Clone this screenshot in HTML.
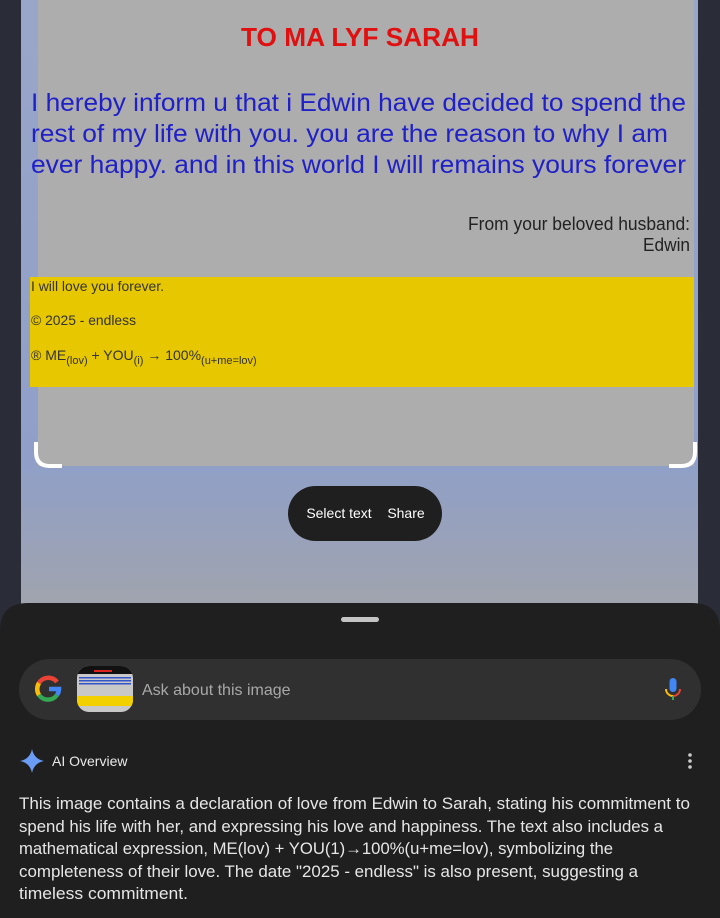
<!DOCTYPE html>
<html><head><meta charset="utf-8"><style>
html,body{margin:0;padding:0;width:720px;height:918px;overflow:hidden;background:#2a2d38;font-family:"Liberation Sans",sans-serif}
</style></head><body>
<svg width="720" height="918" viewBox="0 0 720 918" xmlns="http://www.w3.org/2000/svg" style="display:block;position:absolute;left:0;top:0">
<defs>
<linearGradient id="sky" x1="0" y1="0" x2="0" y2="1">
<stop offset="0" stop-color="#9aa6c9"/><stop offset="0.75" stop-color="#8f9fc8"/><stop offset="1" stop-color="#a1a4ad"/>
</linearGradient>
</defs>
<rect x="0" y="0" width="720" height="918" fill="#2a2d38"/>
<rect x="21" y="0" width="677" height="610" fill="url(#sky)"/>
<rect x="38" y="0" width="656" height="466" fill="#adadad"/>
<rect x="30" y="277" width="664" height="110" fill="#e6c700"/>
<text x="360" y="46" text-anchor="middle" font-size="26" font-weight="bold" fill="#e01010" textLength="238" lengthAdjust="spacingAndGlyphs">TO MA LYF SARAH</text>
<g font-size="25" fill="#2020c8">
<text x="31" y="111" textLength="655" lengthAdjust="spacingAndGlyphs">I hereby inform u that i Edwin have decided to spend the</text>
<text x="31" y="142" textLength="637" lengthAdjust="spacingAndGlyphs">rest of my life with you. you are the reason to why I am</text>
<text x="31" y="173" textLength="655" lengthAdjust="spacingAndGlyphs">ever happy. and in this world I will remains yours forever</text>
</g>
<g font-size="18" fill="#222" text-anchor="end">
<text x="690" y="230" textLength="222" lengthAdjust="spacingAndGlyphs">From your beloved husband:</text>
<text x="690" y="251" textLength="47" lengthAdjust="spacingAndGlyphs">Edwin</text>
</g>
<g font-size="14" fill="#333">
<text x="31" y="291" textLength="133" lengthAdjust="spacingAndGlyphs">I will love you forever.</text>
<text x="31" y="325" textLength="105" lengthAdjust="spacingAndGlyphs">© 2025 - endless</text>
<text x="31" y="360">® ME<tspan font-size="11" dy="4">(lov)</tspan><tspan dy="-4"> + YOU</tspan><tspan font-size="11" dy="4">(i)</tspan><tspan dy="-4"> → 100%</tspan><tspan font-size="11" dy="4">(u+me=lov)</tspan></text>
</g>
<path d="M36 442 V452 Q36 466 50 466 H62" fill="none" stroke="#fff" stroke-width="4"/>
<path d="M695 442 V452 Q695 466 681 466 H669" fill="none" stroke="#fff" stroke-width="4"/>
<rect x="288" y="486" width="154" height="55" rx="27.5" fill="#1f1f1f"/>
<text x="339" y="518" text-anchor="middle" font-size="14" fill="#fff">Select text</text>
<text x="406" y="518" text-anchor="middle" font-size="14" fill="#fff">Share</text>
<path d="M0 918 V631 Q0 603 28 603 H692 Q720 603 720 631 V918 Z" fill="#1f1f1f"/>
<rect x="341" y="617" width="38" height="5" rx="2.5" fill="#c4c4c4"/>
<rect x="19" y="659" width="682" height="61" rx="30.5" fill="#303030"/>
<g transform="translate(48,689)" fill="none" stroke-width="4.5">
<path d="M9 -7 A11 11 0 0 0 -9 -6" stroke="#ea4335"/>
<path d="M-9 -6 A11 11 0 0 0 -9 6" stroke="#fbbc05"/>
<path d="M-9 6 A11 11 0 0 0 9 6" stroke="#34a853"/>
<path d="M9 6 A11 11 0 0 0 11 0 H1" stroke="#4285f4"/>
</g>
<clipPath id="th"><rect x="77" y="666" width="56" height="46" rx="12"/></clipPath>
<g clip-path="url(#th)">
<rect x="77" y="666" width="56" height="46" fill="#c8c8c8"/>
<rect x="77" y="666" width="56" height="8" fill="#111"/>
<rect x="94" y="670" width="18" height="2" fill="#d22"/>
<rect x="79" y="677" width="52" height="1.5" fill="#35c"/>
<rect x="79" y="680" width="52" height="1.5" fill="#35c"/>
<rect x="79" y="683" width="52" height="1.5" fill="#35c"/>
<rect x="77" y="696" width="56" height="10" fill="#f2d000"/>
</g>
<text x="142" y="695" font-size="16" fill="#a8a8a8">Ask about this image</text>
<g transform="translate(673,689)">
<rect x="-3.5" y="-11" width="7" height="14" rx="3.5" fill="#4285f4"/>
<path d="M-7 0 A7 7 0 0 0 0 7" fill="none" stroke="#fbbc05" stroke-width="2"/>
<path d="M7 0 A7 7 0 0 1 0 7" fill="none" stroke="#ea4335" stroke-width="2"/>
<rect x="-1" y="7" width="2" height="4" fill="#34a853"/>
</g>
<path d="M32 749 Q34 759 44 761 Q34 763 32 773 Q30 763 20 761 Q30 759 32 749 Z" fill="#6b9cf6"/>
<text x="52" y="766" font-size="14" fill="#e8e8e8">AI Overview</text>
<circle cx="690" cy="755" r="1.8" fill="#ccc"/><circle cx="690" cy="761" r="1.8" fill="#ccc"/><circle cx="690" cy="767" r="1.8" fill="#ccc"/>
<g font-size="17" fill="#e6e6e6">
<text x="19" y="809" textLength="671" lengthAdjust="spacingAndGlyphs">This image contains a declaration of love from Edwin to Sarah, stating his commitment to</text>
<text x="19" y="832" textLength="644" lengthAdjust="spacingAndGlyphs">spend his life with her, and expressing his love and happiness. The text also includes a</text>
<text x="19" y="854" textLength="594" lengthAdjust="spacingAndGlyphs">mathematical expression, ME(lov) + YOU(1)→100%(u+me=lov), symbolizing the</text>
<text x="19" y="877" textLength="619" lengthAdjust="spacingAndGlyphs">completeness of their love. The date "2025 - endless" is also present, suggesting a</text>
<text x="19" y="899" textLength="169" lengthAdjust="spacingAndGlyphs">timeless commitment.</text>
</g>
</svg>
</body></html>
